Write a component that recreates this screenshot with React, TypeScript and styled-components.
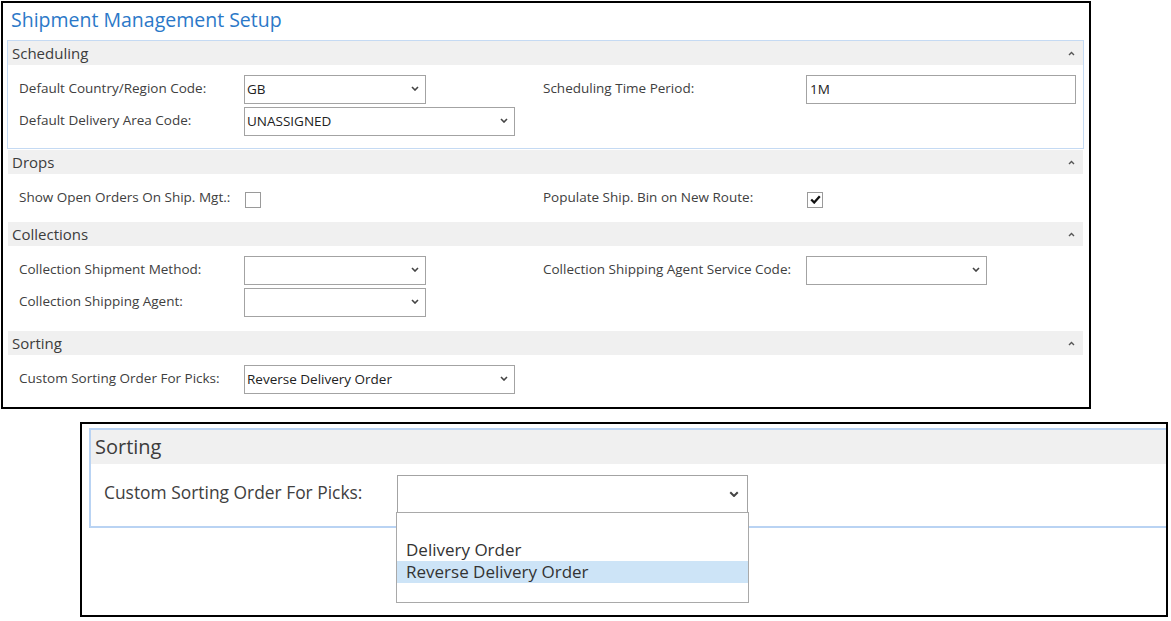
import React from "react";
import styled, { createGlobalStyle } from "styled-components";

const GlobalStyle = createGlobalStyle`
  body {
    margin: 0;
    background: #fff;
    font-family: "Open Sans", "Noto Sans", "Liberation Sans", sans-serif;
  }
`;

const Page = styled.div`
  padding: 1px 0 0 1px;
`;

const Frame = styled.div`
  width: 1086px;
  border: 2px solid #000;
`;

const Title = styled.h1`
  margin: 0;
  height: 33px;
  padding: 4px 0 0 8px;
  font-size: 19.5px;
  font-weight: 400;
  line-height: 26px;
  color: #2b78c8;
`;

const Section = styled.section<{ $focused?: boolean }>`
  margin: 0 5px 0 4px;
  border: 1px solid ${(p) => (p.$focused ? "#c5daf3" : "transparent")};
`;

const SectionHeader = styled.div`
  display: flex;
  align-items: center;
  justify-content: space-between;
  height: 24px;
  padding: 0 8px 0 4px;
  background: #f0f0f0;
  font-size: 15px;
  color: #3c3c3c;
`;

const SectionBody = styled.div<{ $compact?: boolean }>`
  display: grid;
  grid-template-columns: 225px 299px 263px 1fr;
  grid-auto-rows: minmax(24px, auto);
  row-gap: 3px;
  align-items: center;
  padding: ${(p) => (p.$compact ? "12px 0 10px 11px" : "10px 0 12px 11px")};
`;

const Label = styled.span`
  padding-bottom: 3px;
  font-size: 13.5px;
  color: #404040;
  white-space: nowrap;
`;

const Field = styled.div<{ $width: number }>`
  box-sizing: border-box;
  display: flex;
  align-items: center;
  justify-content: space-between;
  width: ${(p) => p.$width}px;
  height: 29px;
  padding: 0 6px 2px 2px;
  border: 1px solid #a3a3a3;
  background: #fff;
  font-size: 13.5px;
  color: #222;
`;

const Check = styled.span`
  box-sizing: border-box;
  display: inline-flex;
  align-items: center;
  justify-content: center;
  width: 16px;
  height: 16px;
  margin-left: 1px;
  border: 1px solid #9a9a9a;
  background: #fff;
  vertical-align: middle;
`;

const ZoomFrame = styled.div`
  box-sizing: border-box;
  width: 1088px;
  height: 195px;
  margin: 13px 0 0 79px;
  padding: 4px 0 0 7px;
  border: 2px solid #000;
`;

const ZoomSection = styled.section`
  border: 2px solid #b9d3f3;
  border-right: none;
`;

const ZoomHeader = styled.div`
  height: 34px;
  padding-left: 4px;
  background: #f0f0f0;
  font-size: 20px;
  line-height: 34px;
  color: #3c3c3c;
`;

const ZoomBody = styled.div`
  display: flex;
  align-items: center;
  padding: 11px 0 13px 13px;
`;

const ZoomLabel = styled.span`
  width: 293px;
  padding-bottom: 4px;
  font-size: 17.4px;
  color: #404040;
  white-space: nowrap;
`;

const ZoomSelect = styled.div`
  position: relative;
  box-sizing: border-box;
  display: flex;
  align-items: center;
  justify-content: flex-end;
  width: 351px;
  height: 38px;
  padding-right: 8px;
  border: 1px solid #a3a3a3;
  background: #fff;
`;

const DropList = styled.ul`
  position: absolute;
  top: 36px;
  left: -2px;
  z-index: 1;
  box-sizing: border-box;
  width: 353px;
  margin: 0;
  padding: 26px 0 19px;
  list-style: none;
  border: 1px solid #a9a9a9;
  background: #fff;
`;

const Option = styled.li<{ $active?: boolean }>`
  height: 22px;
  padding-left: 9px;
  font-size: 17px;
  line-height: 22px;
  color: #333;
  background: ${(p) => (p.$active ? "#cde4f7" : "transparent")};
`;

const Chevron = ({ size = 8 }: { size?: number }) => (
  <svg width={size} height={size * 0.625} viewBox="0 0 8 5" fill="none">
    <polyline points="1,1 4,4 7,1" stroke="#444" strokeWidth="1.6" />
  </svg>
);

const Caret = () => (
  <svg width="7" height="5" viewBox="0 0 7 5" fill="none">
    <polyline points="1,4 3.5,1.5 6,4" stroke="#555" strokeWidth="1.4" />
  </svg>
);

const Tick = () => (
  <svg width="11" height="9" viewBox="0 0 11 9" fill="none">
    <polyline points="1.2,4.5 4.2,7.5 9.8,1.2" stroke="#111" strokeWidth="2.3" />
  </svg>
);

const Select = ({ width, value = "" }: { width: number; value?: string }) => (
  <Field $width={width}>
    <span>{value}</span>
    <Chevron />
  </Field>
);

const Group = ({
  title,
  focused,
  compact,
  children,
}: {
  title: string;
  focused?: boolean;
  compact?: boolean;
  children: React.ReactNode;
}) => (
  <Section $focused={focused}>
    <SectionHeader>
      <span>{title}</span>
      <Caret />
    </SectionHeader>
    <SectionBody $compact={compact}>{children}</SectionBody>
  </Section>
);

export default function App() {
  return (
    <Page>
      <GlobalStyle />
      <Frame>
        <Title>Shipment Management Setup</Title>

        <Group title="Scheduling" focused>
          <Label>Default Country/Region Code:</Label>
          <Select width={182} value="GB" />
          <Label>Scheduling Time Period:</Label>
          <Field $width={270} style={{ paddingLeft: 3 }}>
            <span>1M</span>
          </Field>
          <Label>Default Delivery Area Code:</Label>
          <Select width={271} value="UNASSIGNED" />
        </Group>

        <Group title="Drops" compact>
          <Label>Show Open Orders On Ship. Mgt.:</Label>
          <div>
            <Check />
          </div>
          <Label>Populate Ship. Bin on New Route:</Label>
          <div>
            <Check>
              <Tick />
            </Check>
          </div>
        </Group>

        <Group title="Collections">
          <Label>Collection Shipment Method:</Label>
          <Select width={182} />
          <Label>Collection Shipping Agent Service Code:</Label>
          <Select width={181} />
          <Label>Collection Shipping Agent:</Label>
          <Select width={182} />
        </Group>

        <Group title="Sorting">
          <Label>Custom Sorting Order For Picks:</Label>
          <Select width={271} value="Reverse Delivery Order" />
        </Group>
      </Frame>

      <ZoomFrame>
        <ZoomSection>
          <ZoomHeader>Sorting</ZoomHeader>
          <ZoomBody>
            <ZoomLabel>Custom Sorting Order For Picks:</ZoomLabel>
            <ZoomSelect>
              <Chevron size={10} />
              <DropList>
                <Option>Delivery Order</Option>
                <Option $active>Reverse Delivery Order</Option>
              </DropList>
            </ZoomSelect>
          </ZoomBody>
        </ZoomSection>
      </ZoomFrame>
    </Page>
  );
}
